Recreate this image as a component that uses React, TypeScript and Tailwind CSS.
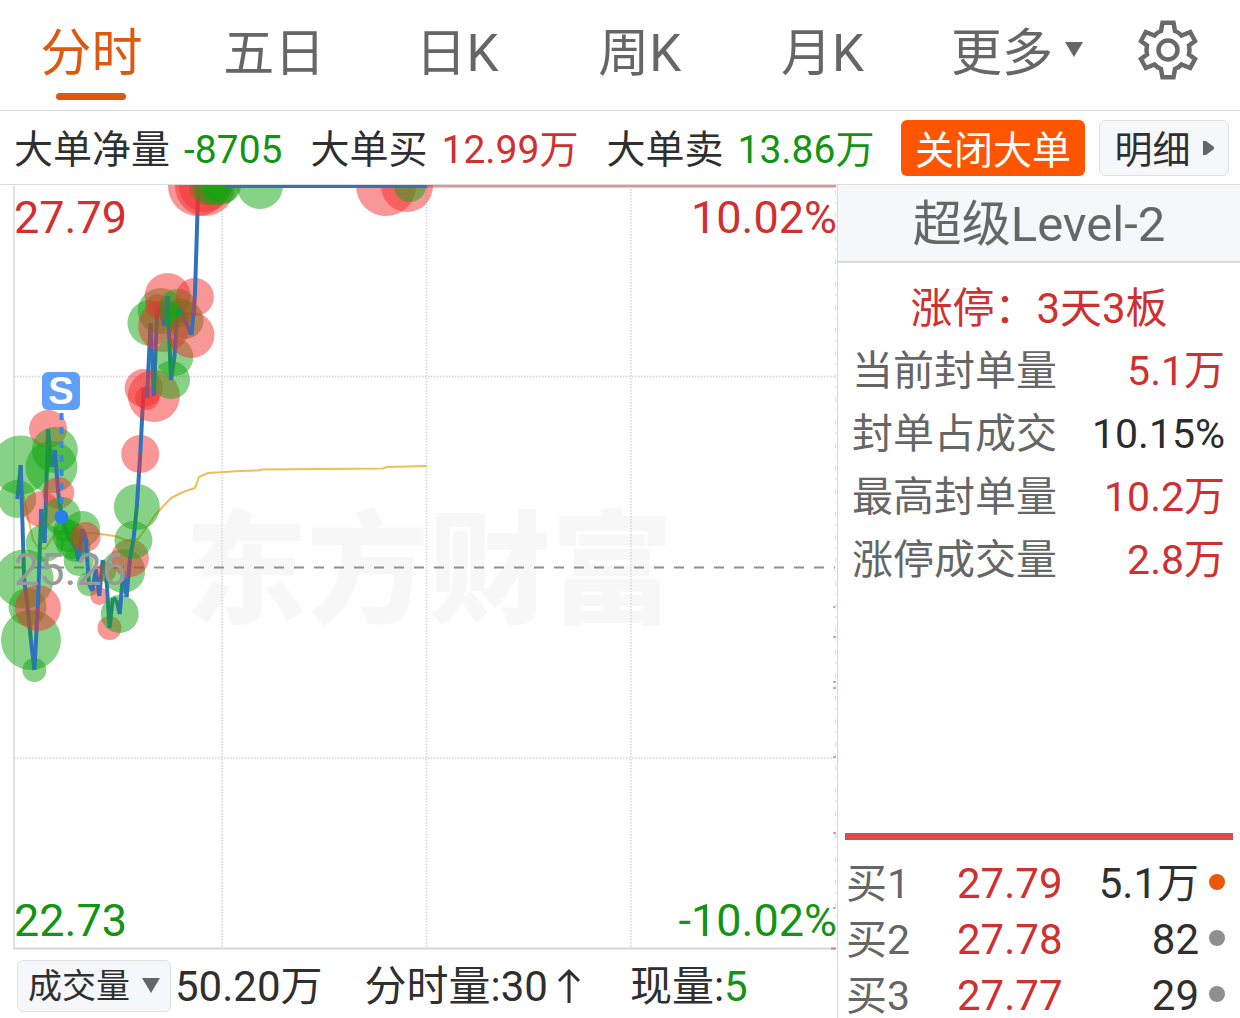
import React from "react";

type Dot = "g" | "r";
type Sample = { y: number; dot?: Dot; r?: number };

const START_X = 17.3;
const STEP_X = 3.415;
const LIMIT_Y = 186;

const samples: Sample[] = [
  { y: 499, dot: "g", r: 19 },
  { y: 465, dot: "g", r: 29.5 },
  { y: 579, dot: "g", r: 29.5 },
  { y: 607, dot: "g", r: 19 },
  { y: 640, dot: "g", r: 30 },
  { y: 670, dot: "g", r: 12 },
  { y: 608, dot: "r", r: 23 },
  { y: 509, dot: "r", r: 18 },
  { y: 543, dot: "g", r: 19 },
  { y: 429, dot: "r", r: 19 },
  { y: 467, dot: "g", r: 26 },
  { y: 450, dot: "g", r: 23 },
  { y: 493, dot: "r", r: 16 },
  { y: 516, dot: "g", r: 19 },
  { y: 530, dot: "g", r: 12 },
  { y: 536, dot: "g", r: 16 },
  { y: 543, dot: "g", r: 16 },
  { y: 547, dot: "g", r: 15 },
  { y: 561, dot: "g", r: 15 },
  { y: 529, dot: "g", r: 18 },
  { y: 537, dot: "r", r: 15 },
  { y: 584, dot: "g", r: 12 },
  { y: 591 },
  { y: 569 },
  { y: 596, dot: "r", r: 9 },
  { y: 560 },
  { y: 572, dot: "r", r: 10 },
  { y: 628, dot: "r", r: 12 },
  { y: 598 },
  { y: 600 },
  { y: 614, dot: "g", r: 19 },
  { y: 571, dot: "g", r: 22 },
  { y: 597 },
  { y: 558, dot: "r", r: 19 },
  { y: 540, dot: "g", r: 19 },
  { y: 507, dot: "g", r: 23 },
  { y: 454, dot: "r", r: 19 },
  { y: 388, dot: "r", r: 19 },
  { y: 398, dot: "r", r: 12 },
  { y: 323, dot: "g", r: 23 },
  { y: 396, dot: "r", r: 26 },
  { y: 306, dot: "r", r: 12 },
  { y: 311, dot: "g", r: 23 },
  { y: 326, dot: "r", r: 26 },
  { y: 296, dot: "r", r: 23 },
  { y: 380, dot: "g", r: 19 },
  { y: 357, dot: "g", r: 19 },
  { y: 308, dot: "g", r: 19 },
  { y: 310, dot: "g", r: 12 },
  { y: 320, dot: "g", r: 19 },
  { y: 327 },
  { y: 335, dot: "r", r: 23 },
  { y: 297, dot: "r", r: 19 },
];

const limitDots: { x: number; dot: Dot; r: number }[] = [
  { x: 198, dot: "r", r: 30 },
  { x: 205, dot: "r", r: 30 },
  { x: 208, dot: "g", r: 19 },
  { x: 205, dot: "r", r: 26 },
  { x: 212, dot: "g", r: 19 },
  { x: 220, dot: "g", r: 19 },
  { x: 218, dot: "g", r: 15 },
  { x: 224, dot: "g", r: 17 },
  { x: 260, dot: "g", r: 23 },
  { x: 386, dot: "r", r: 30 },
  { x: 407, dot: "r", r: 26 },
  { x: 410, dot: "g", r: 16 },
];

const dotFill: Record<Dot, string> = { g: "#11a511", r: "#f32d2d" };
const tickYs = [607, 637, 682, 688, 757, 833, 908];
const xAt = (i: number) => START_X + STEP_X * i;

function PriceChart() {
  return (
    <svg viewBox="0 185 837 765" className="block h-auto w-full" role="img" aria-label="分时走势图">
      <text
        x="429"
        y="613"
        textAnchor="middle"
        className="fill-[#f7f7f7] font-['Noto_Sans_CJK_SC',sans-serif] text-[122px] font-black"
      >
        东方财富
      </text>

      <g stroke="#d4d4d4" strokeWidth="1.5" strokeDasharray="1.5 1.5">
        <path d="M222 186V948M426.500 186V948M631 186V948" />
        <path d="M14 376.500H835M14 758H835" />
      </g>
      <path d="M14 186V948" stroke="#d8d8d8" strokeWidth="1.5" />
      <path d="M13 948.500H835" stroke="#d4d4d4" strokeWidth="2" />
      <path d="M14 567.500H835" stroke="#8f8f8f" strokeWidth="2" strokeDasharray="10 10" />
      <path d="M427 186H836" stroke="#e88f8f" strokeWidth="3" />
      {tickYs.map((y) => (
        <path key={y} d={`M833 ${y}h3`} stroke="#e0a0a0" strokeWidth="2" />
      ))}
      <path d="M835.500 190V945" stroke="#e8dcdc" strokeWidth="1" strokeDasharray="5 7 2 9" />
      <path d="M831 948.500h5" stroke="#d88080" strokeWidth="2" />

      <path
        d="M20 480L24 498L28 517L33 540L38 547L45 549L52 538L60 531L72 532L93 533L115 536L128 541L138 539L147 527L155 515L171 498L183 492L195 488L199 477L208 473L240 471L258 470.500L262 469.500L383 468.500L387 467L427 466"
        fill="none"
        stroke="#edbf55"
        strokeWidth="2"
        strokeLinejoin="round"
      />

      {samples.map((s, i) => (
        <g key={i}>
          {i > 0 && (
            <line x1={xAt(i - 1)} y1={samples[i - 1].y} x2={xAt(i)} y2={s.y} stroke="#2f73bd" strokeWidth="4" />
          )}
          {s.dot && <circle cx={xAt(i)} cy={s.y} r={s.r} fill={dotFill[s.dot]} fillOpacity="0.5" />}
        </g>
      ))}
      <path d={`M${xAt(52)} 297L${xAt(53)} ${LIMIT_Y}`} stroke="#2f73bd" strokeWidth="4" />
      {limitDots.map((d, i) => (
        <circle key={i} cx={d.x} cy={LIMIT_Y} r={d.r} fill={dotFill[d.dot]} fillOpacity="0.5" />
      ))}
      <path d="M225 186H427" stroke="#3573b8" strokeWidth="4" />

      <path d="M61.500 413V516" stroke="#3d86e8" strokeWidth="4" strokeDasharray="7 7" />
      <circle cx="61.500" cy="517" r="7" fill="#2580ec" />
      <rect x="42" y="372" width="38" height="38" rx="6" fill="#5f9ff8" />
      <text
        x="61"
        y="404"
        textAnchor="middle"
        className="fill-white font-['Liberation_Sans',sans-serif] text-[38px] font-bold"
      >
        S
      </text>
    </svg>
  );
}

function GearIcon() {
  return (
    <svg viewBox="-30 -30 60 60" className="size-[60px]" fill="none" stroke="#696969" strokeWidth="4.500" aria-hidden="true">
      <path d="M-5.500 -27.300H5.500L7 -19Q11 -17.500 13.500 -14.500L22.200 -18L27 -9L21 -4.500Q22 0 21 4.500L27 9L22.200 18L13.500 14.500Q11 17.500 7 19L5.500 27.300H-5.500L-7 19Q-11 17.500 -13.500 14.500L-22.200 18L-27 9L-21 4.500Q-22 0 -21 -4.500L-27 -9L-22.200 -18L-13.500 -14.500Q-11 -17.500 -7 -19Z" />
      <circle r="9.500" />
    </svg>
  );
}

const DownArrow = ({ className }: { className: string }) => (
  <svg viewBox="0 0 18 15" className={className} aria-hidden="true">
    <path d="M0 0H18L9 15Z" fill="#666" />
  </svg>
);

const tabs = ["分时", "五日", "日K", "周K", "月K"];

const bigOrders = [
  { label: "大单净量", value: "-8705", color: "text-[#149414]" },
  { label: "大单买", value: "12.99万", color: "text-[#d03030]" },
  { label: "大单卖", value: "13.86万", color: "text-[#149414]" },
];

const sealStats = [
  { label: "当前封单量", value: "5.1万", color: "text-[#d03030]" },
  { label: "封单占成交", value: "10.15%", color: "text-[#2b2b2b]" },
  { label: "最高封单量", value: "10.2万", color: "text-[#d03030]" },
  { label: "涨停成交量", value: "2.8万", color: "text-[#d03030]" },
];

const bids = [
  { label: "买1", price: "27.79", volume: "5.1万", dot: "bg-[#e65a0a]" },
  { label: "买2", price: "27.78", volume: "82", dot: "bg-[#8f8e94]" },
  { label: "买3", price: "27.77", volume: "29", dot: "bg-[#8f8e94]" },
];

export default function App() {
  return (
    <div className="overflow-hidden bg-white font-[Roboto,'Noto_Sans_CJK_SC',sans-serif] text-[#2f2f2f]">
      <nav className="flex h-[111px] items-stretch border-b border-[#dcdcdc] pr-6 text-[51px] leading-[60px] text-[#666]">
        {tabs.map((tab, i) => (
          <button
            key={tab}
            aria-pressed={i === 0}
            className={
              i === 0
                ? "flex flex-1 flex-col items-center pt-6 text-[#dc5a10]"
                : "flex flex-1 flex-col items-center pt-6"
            }
          >
            {tab}
            {i === 0 && <span className="mt-[9px] h-[7px] w-[70px] rounded-full bg-[#dc5a10]" />}
          </button>
        ))}
        <button className="flex w-[206px] justify-center gap-3 pt-6" aria-haspopup="menu">
          更多
          <DownArrow className="mt-[18px] h-[15px] w-[18px]" />
        </button>
        <button className="flex w-24 justify-center pt-5" aria-label="设置">
          <GearIcon />
        </button>
      </nav>

      <div className="flex h-[74px] items-center border-b border-[#dcdcdc] pl-[14px] pr-[11px] text-[39px] leading-[54px] whitespace-nowrap">
        <dl className="flex gap-7 pt-1">
          {bigOrders.map((o) => (
            <div key={o.label} className="flex gap-[14px]">
              <dt>{o.label}</dt>
              <dd className={o.color}>{o.value}</dd>
            </div>
          ))}
        </dl>
        <button className="ml-auto h-14 w-[184px] rounded-md bg-[#ff5500] pt-1 text-white">关闭大单</button>
        <button className="ml-[14px] flex h-14 w-[130px] items-center justify-center gap-3 rounded-md border border-[#dcdfe3] bg-[#f6f7fa] text-[38px]">
          <span className="pt-1">明细</span>
          <svg viewBox="0 0 11 14" className="h-[14px] w-[11px]" aria-hidden="true">
            <path d="M0 0H3L11 6V8L3 14H0Z" fill="#666" />
          </svg>
        </button>
      </div>

      <div className="flex">
        <main className="flex min-w-0 flex-1 flex-col">
          <div className="relative">
            <PriceChart />
            <div className="absolute inset-0 flex flex-col justify-between pt-[6px] pb-[2px] pl-[14px] text-[45px] leading-[54px]">
              <div className="flex justify-between text-[#d03030]">
                <span>27.79</span>
                <span>10.02%</span>
              </div>
              <div className="text-[#999]">25.26</div>
              <div className="flex justify-between text-[#149414]">
                <span>22.73</span>
                <span>-10.02%</span>
              </div>
            </div>
          </div>

          <div className="flex h-[68px] items-center pt-1 pl-[17px] text-[42px] leading-[54px] whitespace-nowrap">
            <div className="relative">
              <select
                aria-label="指标"
                className="block h-[52px] w-[154px] appearance-none rounded-md border border-[#e0e2e6] bg-[#f6f7fa] pl-[10px] text-[34px] leading-[48px]"
              >
                <option>成交量</option>
              </select>
              <DownArrow className="pointer-events-none absolute top-[18px] right-[11px] h-[15px] w-[18px]" />
            </div>
            <span className="ml-1 pt-[2px]">50.20万</span>
            <span className="ml-[42px] pt-[2px]">分时量:30</span>
            <svg viewBox="0 0 24 36" className="ml-[9px] h-9 w-6" fill="none" stroke="#2f2f2f" strokeWidth="3" role="img" aria-label="上升">
              <path d="M12 35V3M2 13L12 3L22 13" />
            </svg>
            <span className="ml-[49px] pt-[2px]">
              现量:<span className="text-[#149414]">5</span>
            </span>
          </div>
        </main>

        <aside className="flex w-[403px] shrink-0 flex-col border-l border-[#d8d8d8]">
          <h2 className="border-b-2 border-[#d5dadf] bg-[#f6f7fa] pt-1 text-center text-[49px] leading-[72px] text-[#666]">
            超级Level-2
          </h2>
          <div className="pt-[14px] text-[41px] leading-[63px]">
            <p className="text-center text-[42px] text-[#d03030]">涨停：3天3板</p>
            <dl className="pr-[15px] pl-[14px]">
              {sealStats.map((s) => (
                <div key={s.label} className="flex justify-between">
                  <dt className="text-[#666]">{s.label}</dt>
                  <dd className={s.color}>{s.value}</dd>
                </div>
              ))}
            </dl>
          </div>
          <div className="mx-[7px] mt-auto mb-[22px] h-[7px] bg-[#dc4c4c]" />
          <table className="w-full text-[42px] leading-[44px]">
            <tbody>
              {bids.map((b) => (
                <tr key={b.label} className="h-14 align-top last:h-11">
                  <th scope="row" className="w-[119px] py-0 pl-[8px] text-left text-[41px] font-normal text-[#666]">
                    {b.label}
                  </th>
                  <td className="p-0 text-[#d03030]">{b.price}</td>
                  <td className="p-0 text-right">{b.volume}</td>
                  <td className="w-[41px] p-0">
                    <span className={`mt-3 ml-[10px] block size-4 rounded-full ${b.dot}`} />
                  </td>
                </tr>
              ))}
            </tbody>
          </table>
        </aside>
      </div>
    </div>
  );
}
